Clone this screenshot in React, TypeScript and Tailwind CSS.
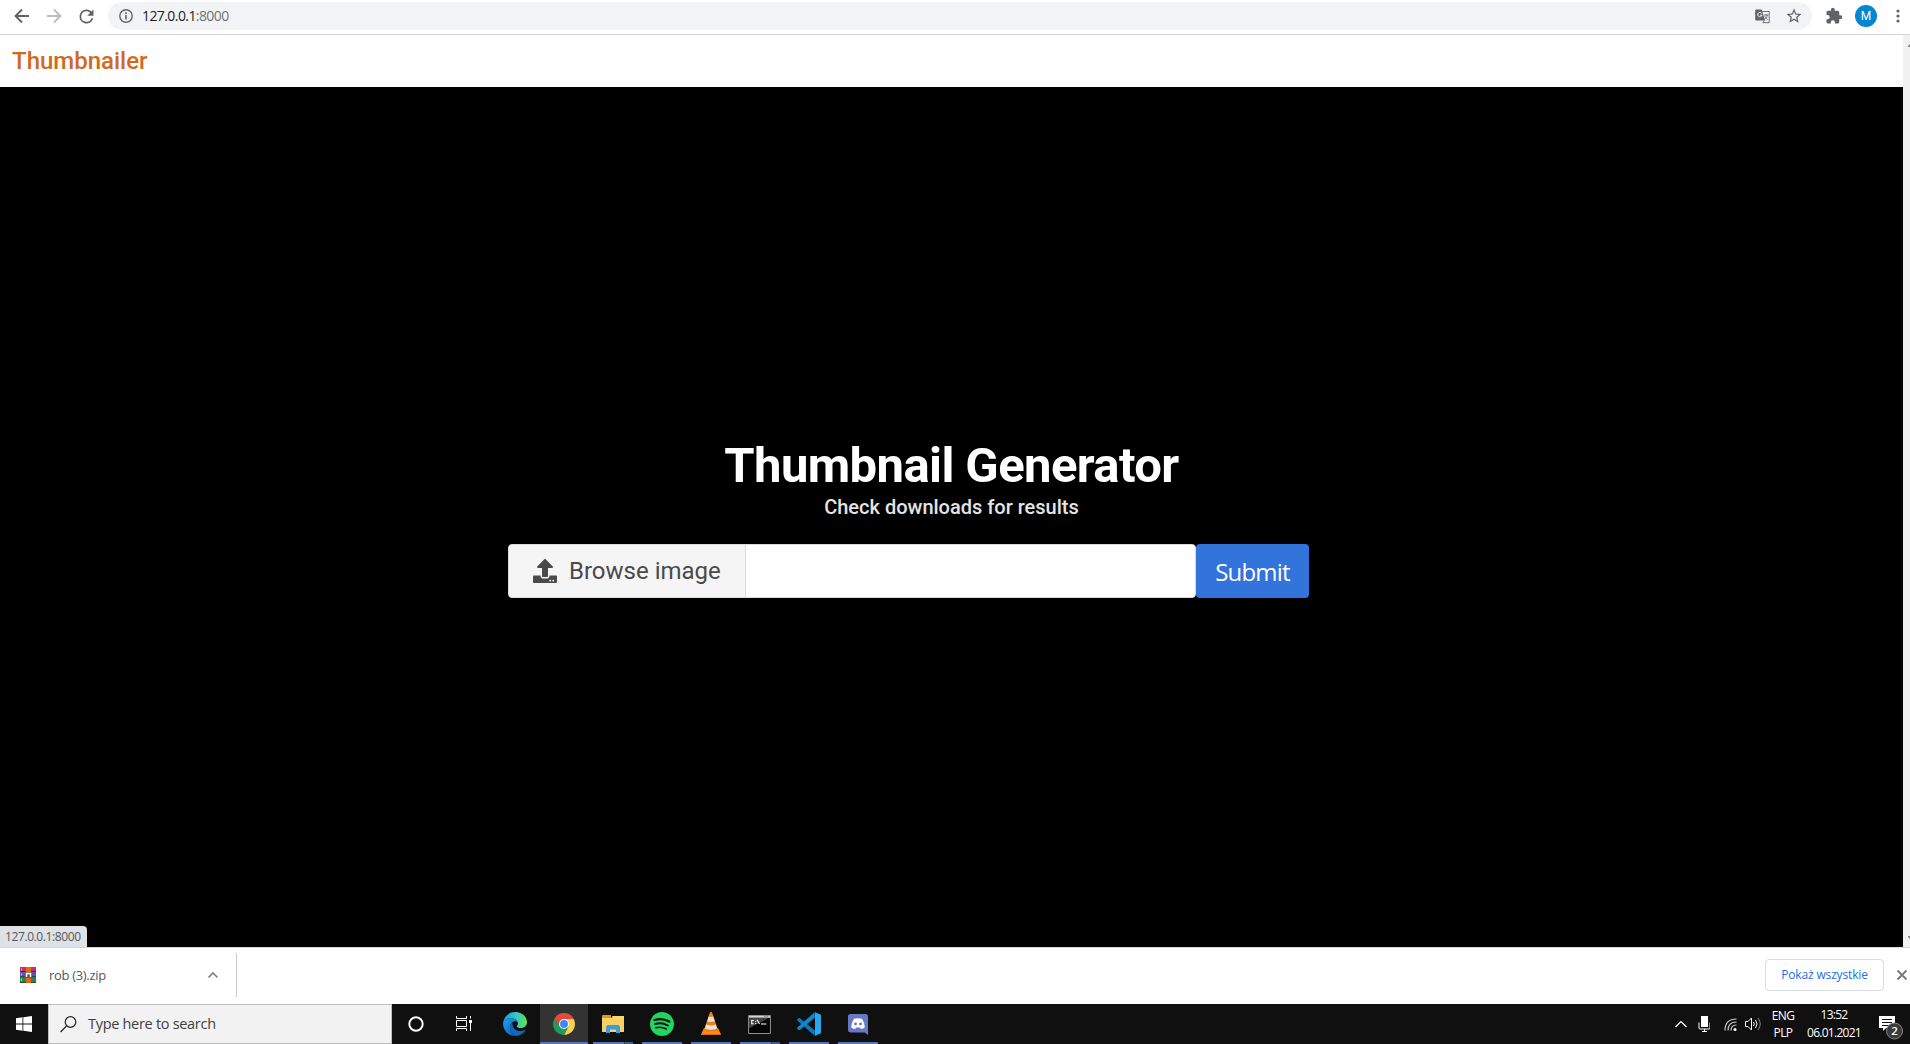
import type { ReactNode } from 'react';

const UI = "font-['Open_Sans','Noto_Sans',sans-serif]";

function Icon({ w, h, vb, children, className = '' }: { w: number; h: number; vb?: string; children: ReactNode; className?: string }) {
  return (
    <svg width={w} height={h} viewBox={vb ?? `0 0 ${w} ${h}`} fill="none" className={`block shrink-0 ${className}`}>
      {children}
    </svg>
  );
}

function BrowserToolbar() {
  return (
    <div className="flex h-[35px] shrink-0 items-start border-b border-[#d5d7da] bg-white text-[#5f6368]">
      <div className="flex h-8 w-[108px] shrink-0 items-center">
        <Icon w={24} h={24} vb="0 0 24 24" className="mr-1 ml-2.5">
          <path d="M19 12H6M12 5.5 5.6 12l6.4 6.5" stroke="currentColor" strokeWidth="1.9" />
        </Icon>
        <Icon w={24} h={24} vb="0 0 24 24" className="mr-2.5 ml-1 text-[#babcbe]">
          <path d="M5 12h13M12 5.5l6.4 6.5-6.4 6.5" stroke="currentColor" strokeWidth="1.9" />
        </Icon>
        <Icon w={21} h={21} vb="0 0 24 24">
          <path d="M17.65 6.35A7.96 7.96 0 0 0 12 4a8 8 0 1 0 7.73 10h-2.08A6 6 0 1 1 12 6c1.66 0 3.14.69 4.22 1.78L13 11h7V4z" fill="currentColor" />
        </Icon>
      </div>
      <div className="mt-0.5 flex h-7 w-[1704px] shrink-0 items-center rounded-full bg-[#f1f3f4] pr-[9px] pl-2.5">
        <Icon w={16} h={16} vb="0 0 16 16">
          <circle cx="8" cy="8" r="6.2" stroke="currentColor" strokeWidth="1.4" />
          <path d="M8 7v4.4M8 4.3v1.6" stroke="currentColor" strokeWidth="1.6" />
        </Icon>
        <span className={`${UI} ml-2 text-sm leading-5 tracking-[-0.58px] text-[#202124]`}>
          127.0.0.1<span className="text-[#6f7377]">:8000</span>
        </span>
        <Icon w={15} h={15} vb="0 0 15 15" className="ml-auto">
          <path d="M5.5 2.5h8.7v11.2H8" stroke="currentColor" strokeWidth="0.9" />
          <path d="M1.3.5h5.4l3.2 11H1.3A1.1 1.1 0 0 1 .2 10.4V1.6A1.1 1.1 0 0 1 1.3.5z" fill="currentColor" />
          <path d="M6.7 4.4A2.2 2.2 0 1 0 7 6.2H4.9" stroke="#f1f3f4" strokeWidth="1" />
          <path d="M8.8 6h4.6M11 5v1M12.4 6c-.3 2-1.8 3.6-3.2 4.500M9.700 7.200l3 3.600M7.500 13.700l2.300-2.300" stroke="currentColor" strokeWidth="0.9" />
        </Icon>
        <Icon w={18} h={18} vb="0 0 24 24" className="ml-[15px]">
          <path d="m22 9.240-7.190-.620L12 2 9.190 8.630 2 9.240l5.460 4.730L5.820 21 12 17.270 18.180 21l-1.630-7.030zM12 15.400l-3.760 2.270 1-4.280-3.320-2.880 4.380-.380L12 6.100l1.710 4.040 4.380.380-3.320 2.880 1 4.280z" fill="currentColor" />
        </Icon>
      </div>
      <div className="flex h-8 flex-1 items-center">
        <Icon w={18} h={18} vb="0 0 24 24" className="ml-[13px]">
          <path d="M20.500 11H19V7a2 2 0 0 0-2-2h-4V3.500a2.500 2.500 0 0 0-5 0V5H4a2 2 0 0 0-1.990 2v3.800H3.500a2.700 2.700 0 0 1 0 5.400H2V20a2 2 0 0 0 2 2h3.800v-1.500a2.700 2.700 0 0 1 5.400 0V22H17a2 2 0 0 0 2-2v-4h1.500a2.500 2.500 0 0 0 0-5z" fill="currentColor" />
        </Icon>
        <div className="ml-3 flex size-[22px] shrink-0 items-center justify-center rounded-full bg-[#0288d1] font-['Roboto',sans-serif] text-xs text-white">M</div>
        <Icon w={4} h={14} className="ml-[19px]">
          <circle cx="2" cy="2" r="1.600" fill="currentColor" />
          <circle cx="2" cy="7" r="1.600" fill="currentColor" />
          <circle cx="2" cy="12" r="1.600" fill="currentColor" />
        </Icon>
      </div>
    </div>
  );
}

function Page() {
  return (
    <div className="relative flex h-[912px] shrink-0">
      <div className="flex w-[1903px] shrink-0 flex-col bg-black">
        <header className="flex h-[52px] shrink-0 items-center bg-white pl-3">
          <span className="font-['Roboto',sans-serif] text-2xl leading-[50px] font-medium text-[#d2691e]">Thumbnailer</span>
        </header>
        <main className="flex flex-col items-center pt-[352px] font-['Roboto',sans-serif]">
          <h1 className="text-[49px] leading-[54px] font-bold tracking-[-0.6px] whitespace-nowrap text-white">Thumbnail Generator</h1>
          <h2 className="mt-0.5 text-xl leading-[25px] font-medium whitespace-nowrap text-[#e4e4e4]">Check downloads for results</h2>
          <form className="mt-6 mr-[86px] flex h-[54px]">
            <div className="flex w-[688px] overflow-hidden rounded-[4px] border border-[#dbdbdb] bg-white">
              <button type="button" className="flex w-[237px] items-center border-r border-[#dbdbdb] bg-[#f5f5f5] pl-6 text-[#4a4a4a]">
                <Icon w={24} h={24} vb="0 0 512 512">
                  <path d="M296 384h-80c-13.300 0-24-10.700-24-24V192h-87.700c-17.800 0-26.700-21.500-14.100-34.100L242.300 5.700c7.500-7.500 19.800-7.500 27.300 0l152.200 152.200c12.600 12.600 3.700 34.100-14.100 34.100H320v168c0 13.300-10.700 24-24 24zm216-8v112c0 13.300-10.700 24-24 24H24c-13.300 0-24-10.700-24-24V376c0-13.300 10.700-24 24-24h136v8c0 30.900 25.100 56 56 56h80c30.900 0 56-25.100 56-56v-8h136c13.300 0 24 10.700 24 24zm-124 88c0-11-9-20-20-20s-20 9-20 20 9 20 20 20 20-9 20-20zm64 0c0-11-9-20-20-20s-20 9-20 20 9 20 20 20 20-9 20-20z" fill="currentColor" />
                </Icon>
                <span className="ml-3 text-2xl leading-9 whitespace-nowrap">Browse image</span>
              </button>
              <div className="flex-1" />
            </div>
            <button type="button" className={`${UI} flex w-[113px] items-center justify-center rounded-[4px] bg-[#3273dc] pt-0.5 text-2xl leading-9 tracking-[-0.8px] text-white`}>Submit</button>
          </form>
        </main>
      </div>
      <div className="flex flex-1 flex-col items-end justify-between bg-[#f1f1f1] pt-[9px] pb-2">
        <Icon w={2} h={3}><path d="M0 3V2l2-2v3z" fill="#858585" /></Icon>
        <Icon w={2} h={3}><path d="M0 0v1l2 2V0z" fill="#858585" /></Icon>
      </div>
      <div className={`${UI} absolute bottom-0 left-0 flex h-[21px] w-[87px] items-center rounded-tr-[4px] bg-[#dee1e6] pl-[5px] text-xs tracking-[-0.4px] whitespace-nowrap text-[#55585c]`}>127.0.0.1:8000</div>
    </div>
  );
}

function ArchiveIcon() {
  return (
    <Icon w={16} h={16}>
      <path d="M0 0h16v5H0z" fill="#d52a5b" />
      <path d="M0 5h16v5H0z" fill="#5454b4" />
      <path d="M0 10h16v6H0z" fill="#16913c" />
      <path d="M0 4.500h16M0 9.700h16M0 15.600h16" stroke="#3c2343" strokeWidth="0.800" />
      <path d="M6 0h5v16H6z" fill="#e0691b" />
      <path d="M1.500 1.500v2M1.500 6.300v2M1.500 11.500v2.500" stroke="#f4d03a" />
      <path d="M5 5h7v6H5z" fill="#80502f" />
      <path d="M6.500 10V6.500h4V10" stroke="#fff" strokeWidth="1.500" />
    </Icon>
  );
}

function DownloadBar() {
  return (
    <div className="flex h-[57px] shrink-0 items-center border-t border-[#d5d7da] bg-white pb-0.5">
      <div className="flex h-[44px] w-[237px] items-center border-r border-[#c9cbce] pl-5">
        <ArchiveIcon />
        <span className={`${UI} ml-[13px] pt-0.5 text-[13px] tracking-[-0.32px] whitespace-nowrap text-[#54575b]`}>rob (3).zip</span>
        <Icon w={12} h={8} className="mr-[17px] ml-auto">
          <path d="M1.500 6.500 6 2l4.500 4.500" stroke="#7d8084" strokeWidth="1.700" />
        </Icon>
      </div>
      <button type="button" className={`${UI} ml-auto flex h-8 w-[119px] items-center justify-center rounded-[4px] border border-[#dadce0] text-xs tracking-[-0.16px] whitespace-nowrap text-[#1a6fe8]`}>Pokaż wszystkie</button>
      <Icon w={12} h={12} className="mr-0.5 ml-3">
        <path d="m1.500 1.500 9 9m0-9-9 9" stroke="#74777b" strokeWidth="1.800" />
      </Icon>
    </div>
  );
}

function TaskButton({ children, active, running, stacked }: { children: ReactNode; active?: boolean; running?: boolean; stacked?: boolean }) {
  return (
    <div className={`flex h-10 w-12 shrink-0 flex-col items-center ${active ? 'bg-[#333333]' : ''}`}>
      <div className="flex h-[38px] items-center justify-center pt-0.5">{children}</div>
      {running && (
        <div className={`flex h-0.5 justify-end bg-[#5675bd] ${active ? 'w-12' : 'w-10'}`}>
          {stacked && <div className="h-0.5 w-[9px] border-l border-[#2c3a60] bg-[#425a92]" />}
        </div>
      )}
    </div>
  );
}

function EdgeIcon() {
  return (
    <Icon w={24} h={24}>
      <defs>
        <linearGradient id="edge-top" x1="2" y1="8" x2="23" y2="8" gradientUnits="userSpaceOnUse">
          <stop stopColor="#1f9fd8" /><stop offset=".5" stopColor="#32c4d0" /><stop offset="1" stopColor="#62df50" />
        </linearGradient>
        <linearGradient id="edge-base" x1="2" y1="7" x2="14" y2="22" gradientUnits="userSpaceOnUse">
          <stop stopColor="#1c9bea" /><stop offset="1" stopColor="#0c5fbb" />
        </linearGradient>
      </defs>
      <path d="M.1 11.500C.600 5 5.500.100 12 .100c7 0 12 4.800 12 10 0 3.900-2.900 6-6 6-2.600 0-4.200-.800-4.200-1.800 0-.700 1.100-1.100 1.100-2.900C14.900 8.500 11.700 6.300 8 6.300c-3.700 0-7 2-7.900 5.200z" fill="url(#edge-top)" />
      <path d="M.1 11.500C.700 8 4 6.200 7.800 6.200c3.900 0 7.100 2.200 7.100 5.200 0-1.400-1.400-2.200-2.900-2.200-3.300 0-5 3.300-5 6.200 0 4.300 3 7.700 7 8.400C6 25 .100 19 .100 11.500z" fill="url(#edge-base)" />
      <path d="M9.600 10C7.700 11.300 7 13.400 7 15.400c0 4.600 3.500 8.300 7.800 8.300 3.200-.700 6-2.700 7.600-5.300.200-.500-.200-.700-.600-.400-5.800 3-13.500-.600-12.200-8z" fill="#1068b8" />
    </Icon>
  );
}

function ChromeIcon() {
  return (
    <Icon w={22} h={22} vb="0 0 24 24">
      <path d="M12 6.500h10.650A12 12 0 0 0 1.610 6l5.630 8.800z" fill="#e04a3f" />
      <path d="M16.800 14.700 12 24A12 12 0 0 0 22.650 6.500H12z" fill="#fdd04c" />
      <path d="M7.240 14.750 1.610 6A12 12 0 0 0 12 24l4.800-9.250z" fill="#209c5a" />
      <circle cx="12" cy="12" r="5.500" fill="#f4f6f8" />
      <circle cx="12" cy="12" r="4.300" fill="#4285f4" />
    </Icon>
  );
}

function Taskbar() {
  return (
    <div className="flex h-10 shrink-0 bg-[#101010] text-white">
      <div className="flex w-12 shrink-0 items-center justify-center">
        <Icon w={16} h={16}>
          <path d="M0 2.200 6.500 1.300v6.300H0zM7.300 1.200 16 0v7.600H7.300zM0 8.400h6.500v6.300L0 13.800zM7.300 8.400H16V16l-8.700-1.200z" fill="#fff" />
        </Icon>
      </div>
      <div className="flex w-[344px] shrink-0 items-center border border-[#bdbdbd] bg-[#f2f2f2] pl-[11px]">
        <Icon w={17} h={17}>
          <circle cx="10.500" cy="6" r="5.300" stroke="#222" strokeWidth="1.200" />
          <path d="M6.600 9.900.600 16" stroke="#222" strokeWidth="1.300" />
        </Icon>
        <span className={`${UI} ml-[11px] text-[14.500px] tracking-[-0.300px] whitespace-nowrap text-[#404040]`}>Type here to search</span>
      </div>
      <TaskButton><Icon w={16} h={16}><circle cx="8" cy="8" r="6.700" stroke="#fff" strokeWidth="1.900" /></Icon></TaskButton>
      <TaskButton>
        <Icon w={16} h={16} className="-mt-0.5">
          <path d="M.5 1v2.500h10V1M.500 16v-2.500h10V16M.500 5.500h10v6H.500zM14.500 1v2.500M14.500 8v8" stroke="#fff" />
          <path d="M13 5h3v3h-3z" fill="#fff" />
        </Icon>
      </TaskButton>
      <div className="ml-[3px] flex gap-px">
        <TaskButton><EdgeIcon /></TaskButton>
        <TaskButton active running><ChromeIcon /></TaskButton>
        <TaskButton running stacked>
          <Icon w={22} h={18}>
            <path d="M0 1.200Q0 0 1 0h8v4H0z" fill="#dc9908" />
            <path d="M1 3h8.500l1-2H22v16H1z" fill="#ffd86a" />
            <path d="M0 3h9l1 1h12v13H0z" fill="#fbd063" />
            <path d="M4 18v-5.500Q4 10 6.500 10h9Q18 10 18 12.500V18h-4v-3.500H8V18z" fill="#3d9ddd" />
          </Icon>
        </TaskButton>
        <TaskButton running>
          <Icon w={24} h={24}>
            <circle cx="12" cy="12" r="12" fill="#1ed760" />
            <path d="M4.500 8c4.500-1.400 10.400-.900 14.800 1.600" stroke="#101010" strokeWidth="2.300" strokeLinecap="round" />
            <path d="M5.200 12c4.200-1.200 8.800-.700 12.600 1.500" stroke="#101010" strokeWidth="1.900" strokeLinecap="round" />
            <path d="M5.800 15.700c3.700-.900 7.400-.500 10.500 1.300" stroke="#101010" strokeWidth="1.600" strokeLinecap="round" />
          </Icon>
        </TaskButton>
        <TaskButton running>
          <Icon w={20} h={24}>
            <path d="M3 16h14l3 6.500v.500H0v-.500z" fill="#f58a15" />
            <path d="m8.700 1 .600-1h1.400l.600 1L17 18q-7 3-14 0z" fill="#f07e10" />
            <path d="m7.700 4.500-1.500 4.800q3.800 1.500 7.600 0l-1.500-4.800q-2.300.800-4.600 0zM5.200 12.500l-1.200 4q6 2.500 12 0l-1.200-4q-4.800 2-9.600 0z" fill="#e4e4e4" />
            <path d="M0 22h20v1H0z" fill="#dd6910" />
          </Icon>
        </TaskButton>
        <TaskButton running stacked>
          <Icon w={23} h={19} vb="0 0 24 20" className="-ml-px">
            <path d="M.500.500h23v19H.500z" fill="#050505" stroke="#999" />
            <path d="M1 1h22v2H1z" fill="#d5d5d5" />
            <path d="M17 1.300h1.500M19.500 1.300H21" stroke="#444" strokeWidth=".8" />
            <path d="M1 3h21L1 14z" fill="#454545" />
            <path d="M6 5.800H3.800v3.400H6M8 6v1M8 8.500v1M9.500 5l2.500 4.500M13.500 9.500h5.800" stroke="#fff" strokeWidth="1.100" />
          </Icon>
        </TaskButton>
        <TaskButton running>
          <Icon w={24} h={24}>
            <path d="M1.800 6 .300 7.200q-.500.600 0 1.200L17.500 23.700 18 18.500 3.100 6.200q-.600-.500-1.300-.200z" fill="#0877bd" />
            <path d="M1.800 18 .300 16.800q-.500-.600 0-1.200L17.500.300 18 5.500 3.100 17.800q-.600.500-1.300.200z" fill="#1086d0" />
            <path d="m17.400 0 6 2.600q.600.300.600.900v17q0 .600-.600.900L17.400 24q.600-.300.600-1.200V1.200q0-.900-.600-1.200z" fill="#2aa7f2" />
          </Icon>
        </TaskButton>
        <TaskButton running>
          <Icon w={20} h={22} className="mt-px">
            <path d="M2.500 0h15Q20 0 20 2.500V21l-3-2.600H2.500Q0 18.400 0 16V2.500Q0 0 2.500 0z" fill="#6779c6" />
            <path d="M6 4.800q4-1 8 0 2.600 4 2.800 8.500-1.500 1.500-4 1.700l-.800-1.400H8L7.200 15q-2.500-.200-4-1.700Q3.400 8.800 6 4.800z" fill="#fff" />
            <circle cx="7.500" cy="10" r="1.400" fill="#6779c6" />
            <circle cx="12.500" cy="10" r="1.400" fill="#6779c6" />
          </Icon>
        </TaskButton>
      </div>
      <div className={`${UI} ml-auto flex items-center text-xs leading-[17px]`}>
        <Icon w={14} h={8} className="mr-2.5"><path d="m1.500 7 5.500-5.500L12.500 7" stroke="#fff" strokeWidth="1.200" /></Icon>
        <Icon w={12} h={16} className="mr-3.5">
          <path d="M3 0h7v11H3z" fill="#fff" />
          <path d="M1 6.500V12q0 1 1 1h9q1 0 1-1V6.500M6.500 13v2.500M4 15.500h5" stroke="#fff" />
        </Icon>
        <Icon w={13} h={13} className="mr-2">
          <path d="M1 12.500Q1 1 12.500 1M4 12.500Q4 4 12.500 4M7 12.500Q7 7 12.500 7" stroke="#c8c8c8" strokeWidth="1.200" />
          <circle cx="11" cy="11.500" r="1.500" fill="#fff" />
        </Icon>
        <Icon w={16} h={14} className="mr-2.5">
          <path d="M.500 4.500H3L6.500 1v12L3 9.500H.500z" stroke="#fff" />
          <path d="M8.500 5q1.500 2 0 4M10.500 3q3 4 0 8" stroke="#fff" />
          <path d="M13 1q4.500 6 0 12" stroke="#888" />
        </Icon>
        <div className="flex w-[24px] flex-col items-center tracking-[-0.600px]"><span>ENG</span><span>PLP</span></div>
        <div className="ml-3 flex w-[54px] flex-col items-center gap-px pb-px tracking-[-0.720px]"><span>13:52</span><span>06.01.2021</span></div>
        <Icon w={24} h={25} className="mt-[7px] mr-[7px] ml-[18px]">
          <path d="M0 1h16v12H7l-3 3v-3H0z" fill="#fff" />
          <path d="M3 4.500h10M3 7.500h10M3 10.500h7" stroke="#101010" />
          <circle cx="15.500" cy="16" r="8" fill="#3b3b3b" stroke="#858585" />
          <text x="15.500" y="20" fill="#fff" fontSize="11.500" fontFamily="Open Sans" textAnchor="middle" fontWeight="600">2</text>
        </Icon>
      </div>
    </div>
  );
}

export default function App() {
  return (
    <div className="flex h-[1044px] w-[1910px] flex-col overflow-hidden bg-white">
      <BrowserToolbar />
      <Page />
      <DownloadBar />
      <Taskbar />
    </div>
  );
}
